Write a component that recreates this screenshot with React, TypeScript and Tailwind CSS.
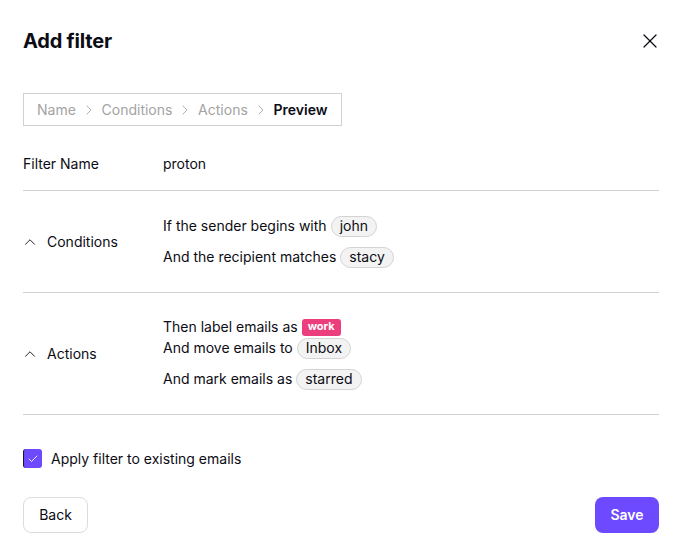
import { X, ChevronUp, ChevronRight, Check } from "lucide-react";

const STEPS = ["Name", "Conditions", "Actions"];

function Pill(props: { children: string }) {
  return (
    <span className="ml-1 inline-flex h-[21px] items-center rounded-full border border-[#d3d3d3] bg-[#f3f3f3] px-2 text-sm leading-none text-[#0c0c14]">
      {props.children}
    </span>
  );
}

function Section(props: { title: string; children: React.ReactNode }) {
  return (
    <div className="flex items-center border-b border-[#d1d1d1] py-6">
      <div className="flex w-[140px] items-center text-sm">
        <ChevronUp size={18} strokeWidth={1.2} className="-ml-[2px] text-[#0c0c14]" />
        <span className="ml-[8px]">{props.title}</span>
      </div>
      <div className="flex flex-col">{props.children}</div>
    </div>
  );
}

export default function App() {
  return (
    <div
      className="flex h-[556px] w-[683px] flex-col bg-white pl-[23px] pr-6 text-[#0c0c14]"
      style={{ fontFamily: "Inter, 'Noto Sans', sans-serif" }}
    >
      {/* header */}
      <div className="mt-[27px] flex h-7 items-center justify-between">
        <h1 className="text-xl font-bold tracking-[-0.2px]">Add filter</h1>
        <X size={24} strokeWidth={1.2} className="-mr-[3px]" />
      </div>

      {/* steps */}
      <div className="mt-[38px] flex h-[33px] w-[319px] items-center border border-[#d1d1d1] px-[13px] text-sm">
        {STEPS.map((step) => (
          <div key={step} className="flex items-center text-[#a3a3a3]">
            <span>{step}</span>
            <ChevronRight size={16} strokeWidth={1.3} className="ml-[5px] mr-[4.7px]" />
          </div>
        ))}
        <span className="font-semibold text-[#0c0c14]">Preview</span>
      </div>

      {/* name */}
      <div className="mt-[28px] flex border-b border-[#d1d1d1] pb-4 text-sm leading-5">
        <span className="w-[140px]">Filter Name</span>
        <span>proton</span>
      </div>

      <Section title="Conditions">
        <div className="flex h-[22px] items-center text-sm">
          If the sender begins with <Pill>john</Pill>
        </div>
        <div className="mt-[9px] flex h-[22px] items-center text-sm">
          And the recipient matches <Pill>stacy</Pill>
        </div>
      </Section>

      <Section title="Actions">
        <div className="flex h-5 items-center text-sm">
          Then label emails as
          <span className="ml-1 inline-flex h-[17px] items-center rounded-[3px] bg-[#ec3e7d] px-[6px] text-[11px] font-bold text-white">
            work
          </span>
        </div>
        <div className="flex h-[22px] items-center text-sm">
          And move emails to <Pill>Inbox</Pill>
        </div>
        <div className="mt-[9px] flex h-[22px] items-center text-sm">
          And mark emails as <Pill>starred</Pill>
        </div>
      </Section>

      {/* checkbox */}
      <label className="mt-[34px] flex h-[19px] items-center text-sm">
        <span className="flex h-[19px] w-[19px] items-center justify-center rounded-[3px] border-l border-l-[#1a1a1a] bg-[#6d4aff]">
          <Check size={12} strokeWidth={1.8} className="text-white" />
        </span>
        <span className="ml-[9px]">Apply filter to existing emails</span>
      </label>

      {/* footer */}
      <div className="mt-[29px] flex justify-between">
        <button className="h-9 w-[65px] rounded-lg border border-[#dcdcdc] bg-white text-sm">
          Back
        </button>
        <button className="h-9 w-[64px] rounded-lg bg-[#6d4aff] text-sm font-semibold text-white">
          Save
        </button>
      </div>
    </div>
  );
}
